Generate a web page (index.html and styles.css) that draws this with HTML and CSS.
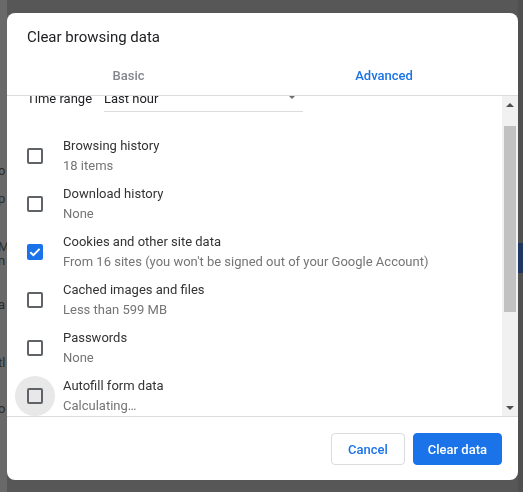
FILE: index.html
```
<!DOCTYPE html>
<html lang="en">
<head>
<meta charset="utf-8">
<title>Clear browsing data</title>
<link rel="stylesheet" href="styles.css">
</head>
<body>
<div class="page">
  <div class="page-side">
    <span class="frag f1">o</span>
    <span class="frag f2">p</span>
    <span class="frag f3">M</span>
    <span class="frag f4">n</span>
    <span class="frag f5">a</span>
    <span class="frag f6">tl</span>
    <span class="frag f7">o</span>
  </div>
  <div class="page-right"><div class="blue-block"></div></div>
</div>

<div class="dialog" role="dialog">
  <div class="dialog-title">Clear browsing data</div>
  <div class="tabs">
    <div class="tab">Basic</div>
    <div class="tab selected">Advanced</div>
  </div>
  <div class="body">
    <div class="scroller">
      <div class="content">
        <div class="time-row">
          <span class="time-label">Time range</span>
          <div class="select">
            <span>Last hour</span>
            <span class="select-arrow"></span>
          </div>
        </div>
        <div class="list">
          <div class="item">
            <span class="cb"></span>
            <div class="text"><div class="lbl">Browsing history</div><div class="sub">18 items</div></div>
          </div>
          <div class="item">
            <span class="cb"></span>
            <div class="text"><div class="lbl">Download history</div><div class="sub">None</div></div>
          </div>
          <div class="item">
            <span class="cb checked"><svg width="16" height="16" viewBox="0 0 16 16"><rect x="0" y="0" width="16" height="16" rx="2" fill="#1a73e8"/><path d="M3.3 8.3 L6.4 11.2 L12.6 4.9" fill="none" stroke="#fff" stroke-width="2"/></svg></span>
            <div class="text"><div class="lbl">Cookies and other site data</div><div class="sub">From 16 sites (you won't be signed out of your Google Account)</div></div>
          </div>
          <div class="item">
            <span class="cb"></span>
            <div class="text"><div class="lbl">Cached images and files</div><div class="sub">Less than 599 MB</div></div>
          </div>
          <div class="item">
            <span class="cb"></span>
            <div class="text"><div class="lbl">Passwords</div><div class="sub">None</div></div>
          </div>
          <div class="item">
            <span class="cb focused"></span>
            <div class="text"><div class="lbl">Autofill form data</div><div class="sub">Calculating…</div></div>
          </div>
        </div>
      </div>
    </div>
    <div class="scrollbar">
      <div class="sb-btn"><span class="arrow-up"></span></div>
      <div class="sb-track">
        <div class="sb-thumb"></div>
      </div>
      <div class="sb-btn"><span class="arrow-down"></span></div>
    </div>
  </div>
  <div class="footer">
    <button class="btn cancel">Cancel</button>
    <button class="btn primary">Clear data</button>
  </div>
</div>
</body>
</html>
```

FILE: styles.css
```
html, body {
  margin: 0;
  padding: 0;
}
body {
  width: 523px;
  height: 492px;
  overflow: hidden;
  background: #575757;
  font-family: Roboto, "Liberation Sans", Arial, sans-serif;
}
.page {
  display: flex;
  justify-content: space-between;
  height: 492px;
}
.page-side {
  width: 7px;
  height: 492px;
  background: #696969;
  display: flex;
  flex-direction: column;
  overflow: hidden;
  font-size: 13px;
  color: #2c2c2c;
}
.frag {
  display: block;
  line-height: 14px;
  margin-left: -2px;
  white-space: nowrap;
}
.f1 { margin-top: 164px; }
.f2 { margin-top: 14px; }
.f3 { margin-top: 34px; }
.f4 { margin-top: 0; }
.f5 { margin-top: 30px; }
.f6 { margin-top: 44px; }
.f7 { margin-top: 32px; }
.page-right {
  width: 5px;
  height: 492px;
  background: #505050;
  display: flex;
  flex-direction: column;
}
.blue-block {
  margin-top: 243px;
  height: 30px;
  background: #1e3760;
}

.dialog {
  position: fixed;
  left: 7px;
  top: 13px;
  width: 511px;
  height: 467px;
  background: #fff;
  border-radius: 8px;
  overflow: hidden;
  display: flex;
  flex-direction: column;
}
.dialog-title {
  padding: 14px 20px 0;
  height: 20px;
  line-height: 20px;
  font-size: 15px;
  color: #202124;
  margin-bottom: 8px;
}
.tabs {
  display: grid;
  grid-template-columns: 243px 1fr;
  height: 40px;
  border-bottom: 1px solid #dadce0;
}
.tab {
  display: flex;
  align-items: center;
  justify-content: center;
  font-size: 13px;
  font-weight: 500;
  color: #80868b;
  padding-top: 1px;
}
.tab.selected {
  color: #1a73e8;
}
.body {
  height: 320px;
  display: flex;
}
.scroller {
  flex: 1;
  overflow: hidden;
}
.content {
  margin-top: -11px;
  padding: 0 20px;
}
.time-row {
  display: flex;
  align-items: center;
  height: 27px;
  font-size: 13px;
  color: #202124;
}
.time-label {
  width: 77px;
}
.select {
  width: 199px;
  height: 26px;
  border-bottom: 1px solid #dadce0;
  display: flex;
  align-items: center;
  justify-content: space-between;
  color: #202124;
}
.select-arrow {
  width: 0;
  height: 0;
  border-left: 5px solid transparent;
  border-right: 5px solid transparent;
  border-top: 5px solid #6e6e6e;
  margin-right: 6px;
  margin-bottom: 3px;
}
.list {
  padding-top: 20px;
}
.item {
  height: 48px;
  display: flex;
  align-items: center;
  gap: 20px;
  isolation: isolate;
}
.cb {
  position: relative;
  width: 16px;
  height: 16px;
  box-sizing: border-box;
  border: 2px solid #5f6368;
  border-radius: 2px;
  flex: none;
}
.cb.checked {
  border: 0;
}
.cb.checked svg {
  display: block;
}
.cb.focused::before {
  content: "";
  position: absolute;
  left: -14px;
  top: -14px;
  width: 40px;
  height: 40px;
  border-radius: 50%;
  background: #e8e8e8;
  z-index: -1;
}
.text {
  padding-bottom: 1px;
}
.lbl {
  font-size: 13px;
  line-height: 20px;
  color: #333333;
}
.sub {
  font-size: 13px;
  line-height: 20px;
  color: #757575;
}
.scrollbar {
  width: 16px;
  background: #f1f1f1;
  display: flex;
  flex-direction: column;
}
.sb-btn {
  height: 17px;
  display: flex;
  align-items: center;
  justify-content: center;
}
.arrow-up {
  width: 0;
  height: 0;
  border-left: 4px solid transparent;
  border-right: 4px solid transparent;
  border-bottom: 4px solid #505050;
}
.arrow-down {
  width: 0;
  height: 0;
  border-left: 4px solid transparent;
  border-right: 4px solid transparent;
  border-top: 4px solid #505050;
}
.sb-track {
  flex: 1;
  padding: 13px 2px 0;
}
.sb-thumb {
  height: 186px;
  background: #c1c1c1;
}
.footer {
  border-top: 1px solid #dadce0;
  padding: 16px 16px 15px;
  display: flex;
  justify-content: flex-end;
  gap: 8px;
}
.btn {
  height: 32px;
  padding: 0 16px;
  border-radius: 4px;
  font-family: Roboto, "Liberation Sans", Arial, sans-serif;
  font-size: 13px;
  font-weight: 500;
  cursor: pointer;
}
.btn.cancel {
  background: #fff;
  color: #1a73e8;
  border: 1px solid #dadce0;
}
.btn.primary {
  background: #1a73e8;
  color: #fff;
  border: 1px solid #1a73e8;
  padding: 0 14px;
}
```
